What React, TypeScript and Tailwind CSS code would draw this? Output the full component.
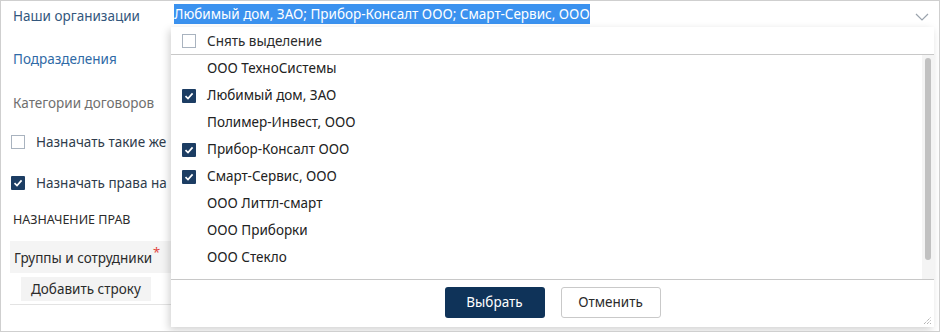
import React from 'react';

const font = { fontFamily: '"Noto Sans", "Open Sans", sans-serif' };

type Org = { name: string; checked: boolean };

const orgs: Org[] = [
  { name: 'ООО ТехноСистемы', checked: false },
  { name: 'Любимый дом, ЗАО', checked: true },
  { name: 'Полимер-Инвест, ООО', checked: false },
  { name: 'Прибор-Консалт ООО', checked: true },
  { name: 'Смарт-Сервис, ООО', checked: true },
  { name: 'ООО Литтл-смарт', checked: false },
  { name: 'ООО Приборки', checked: false },
  { name: 'ООО Стекло', checked: false },
];

// чекбокс в стиле формы
const Check = ({ checked }: { checked: boolean }) =>
  checked ? (
    <span className="flex h-[14px] w-[14px] shrink-0 items-center justify-center rounded-[1px] bg-[#1c3d63]">
      <svg width="10" height="10" viewBox="0 0 10 10" fill="none">
        <path d="M1.5 5.2 L4 7.6 L8.6 2.4" stroke="#fff" strokeWidth="1.7" />
      </svg>
    </span>
  ) : (
    <span className="h-[14px] w-[14px] shrink-0 border border-[#a9b3bf] bg-white" />
  );

export default function App() {
  return (
    <div
      className="relative h-[332px] w-[940px] overflow-hidden border border-[#cfcfcf] bg-white text-[13.5px] text-[#2b2b2b]"
      style={font}
    >
      {/* форма */}
      <div className="flex flex-col pl-[12px] pr-[6px]">
        <div className="flex h-[28px] items-center">
          <span className="w-[158px] pt-[2px] text-[#33577d]">Наши организации</span>
          <div className="relative flex h-[28px] flex-1 items-center border-b-2 border-[#0b4f9c] pl-[3px]">
            <span className="bg-[#3b92ef] leading-[20px] text-white">
              Любимый дом, ЗАО; Прибор-Консалт ООО; Смарт-Сервис, ООО
            </span>
            <svg className="absolute right-[4px] top-[12px]" width="14" height="8" viewBox="0 0 14 8" fill="none">
              <path d="M1 1 L7 7 L13 1" stroke="#9aa3ad" strokeWidth="1.2" />
            </svg>
          </div>
        </div>

        <div className="mt-[20px] h-[20px] leading-[20px] text-[#2f6aa6]">Подразделения</div>

        <div className="mt-[24px] h-[20px] leading-[20px] text-[#6f6f6f]">Категории договоров</div>

        <div className="-ml-[2px] mt-[19px] flex h-[20px] items-center gap-[11px]">
          <Check checked={false} />
          <span className="w-[133px] overflow-hidden whitespace-nowrap text-[#2f3c4c]">
            Назначать такие же права на подчинённые организации
          </span>
        </div>

        <div className="-ml-[2px] mt-[21px] flex h-[20px] items-center gap-[11px]">
          <Check checked={true} />
          <span className="w-[133px] overflow-hidden whitespace-nowrap text-[#2f3c4c]">
            Назначать права на смежные подразделения
          </span>
        </div>

        <div className="mt-[17px] h-[20px] text-[12.5px] leading-[20px] text-[#2b2b2b]">НАЗНАЧЕНИЕ ПРАВ</div>

        <div className="-ml-[3px] mt-[11px] flex h-[32px] items-center bg-[#f4f4f4] pl-[4px]">
          <span className="relative pt-[2px]">
            Группы и сотрудники
            <span className="absolute -right-[8px] -top-[3px] text-[13px] text-[#e2463f]">*</span>
          </span>
        </div>

        <div className="-ml-[3px] border-b border-[#e3e3e3] pb-[3px] pl-[11px] pt-[4px]">
          <span className="inline-flex h-[24px] items-center bg-[#f3f3f3] px-[10px]">Добавить строку</span>
        </div>
      </div>

      {/* выпадающий список */}
      <div className="absolute left-[170px] top-[26px] flex h-[300px] w-[763px] flex-col bg-white shadow-[-2px_3px_8px_rgba(0,0,0,0.18)]">
        <div className="flex h-[28px] shrink-0 items-center gap-[11px] border-b border-[#c8c8c8] pl-[11px]">
          <Check checked={false} />
          <span className="pt-[1px]">Снять выделение</span>
        </div>

        <div className="flex h-[225px] shrink-0 border-b border-[#c8c8c8]">
          <div className="flex flex-1 flex-col">
            {orgs.map((o) => (
              <div key={o.name} className="flex h-[27px] items-center gap-[11px] pl-[11px] text-[#222]">
                {o.checked ? <Check checked /> : <span className="w-[14px] shrink-0" />}
                <span>{o.name}</span>
              </div>
            ))}
          </div>
          <div className="w-[12px] bg-[#f4f4f4] pt-[3px]">
            <div className="mx-auto h-[202px] w-[6px] rounded-full bg-[#c1c1c1]" />
          </div>
        </div>

        <div className="relative flex flex-1 items-start justify-center gap-[16px] pt-[7px]">
          <button className="flex h-[31px] w-[100px] items-center justify-center rounded-[3px] bg-[#0f3359] text-white">
            Выбрать
          </button>
          <button className="flex h-[31px] w-[100px] items-center justify-center rounded-[3px] border border-[#c9c9c9] bg-white text-[#2b2b2b]">
            Отменить
          </button>
          <svg className="absolute bottom-[2px] right-[2px]" width="9" height="9" viewBox="0 0 9 9" fill="none">
            <path d="M1 8 L8 1 M4 8 L8 4 M7 8 L8 7" stroke="#777" strokeWidth="0.8" strokeDasharray="1 1" />
          </svg>
        </div>
      </div>
    </div>
  );
}
